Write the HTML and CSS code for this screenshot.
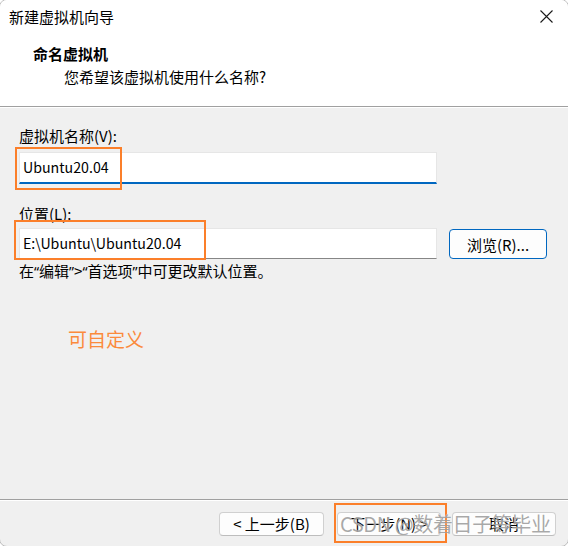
FILE: index.html
```html
<!DOCTYPE html>
<html lang="zh-CN">
<head>
<meta charset="utf-8">
<title>新建虚拟机向导</title>
<link rel="stylesheet" href="styles.css">
</head>
<body>
<div class="window">
  <div class="titlebar">
    <span class="title">新建虚拟机向导</span>
    <svg class="close" width="13" height="13" viewBox="0 0 13 13"><path d="M0.5 0.5 L12.5 12.5 M12.5 0.5 L0.5 12.5" stroke="#1a1a1a" stroke-width="1.1" fill="none"/></svg>
  </div>
  <div class="header">
    <div class="h1">命名虚拟机</div>
    <div class="h2">您希望该虚拟机使用什么名称?</div>
  </div>
  <div class="content">
    <div class="label">虚拟机名称(V):</div>
    <div class="input focused">Ubuntu20.04</div>
    <div class="label label2">位置(L):</div>
    <div class="row">
      <div class="input plain">E:\Ubuntu\Ubuntu20.04</div>
      <div class="browse">浏览(R)...</div>
    </div>
    <div class="note">在<span class="q">“</span>编辑<span class="q">”</span>&gt;<span class="q">“</span>首选项<span class="q">”</span>中可更改默认位置。</div>
    <div class="custom">可自定义</div>
  </div>
  <div class="footer">
    <div class="btn prev">&lt; 上一步(B)</div>
    <div class="btn next">下一步(N) &gt;</div>
    <div class="btn cancel">取消</div>
  </div>
  <div class="mark mark1"></div>
  <div class="mark mark2"></div>
  <div class="mark mark3"></div>
  <div class="watermark">CSDN @数着日子等毕业</div>
</div>
</body>
</html>
```
FILE: styles.css
```css
html, body {
  margin: 0;
  padding: 0;
}
body {
  width: 568px;
  height: 546px;
  overflow: hidden;
  background: #ffffff;
  font-family: "Noto Sans CJK SC", "Noto Sans", sans-serif;
  font-size: 15px;
  color: #000;
}
.window {
  position: relative;
  margin: -1px;
  width: 568px;
  height: 546px;
  border: 1px solid #bdbdbd;
  border-radius: 8px;
  overflow: hidden;
  background: #f0f0f0;
  display: flex;
  flex-direction: column;
}
.titlebar {
  height: 33px;
  flex: none;
  background: #fff;
  display: flex;
  align-items: center;
  justify-content: space-between;
  padding: 0 15px 0 9px;
}
.title {
  line-height: 20px;
}
.close {
  display: block;
}
.header {
  height: 73px;
  flex: none;
  background: #fff;
  border-bottom: 1px solid #a0a0a0;
}
.h1 {
  padding: 11px 0 0 33px;
  line-height: 20px;
  font-weight: bold;
}
.h2 {
  margin-top: 3px;
  padding-left: 64px;
  line-height: 20px;
}
.content {
  flex: 1;
  border-top: 1px solid #ffffff;
  padding: 18px 21px 0 19px;
}
.label {
  line-height: 20px;
}
.label2 {
  margin-top: 20px;
}
.input {
  box-sizing: border-box;
  width: 418px;
  background: #fff;
  border: 1px solid #e6e6e6;
  padding: 0 0 2px 3px;
  font-size: 14.2px;
  display: flex;
  align-items: center;
}
.focused {
  margin-top: 6px;
  height: 32px;
  border-bottom: 2px solid #0067c0;
}
.plain {
  height: 31px;
  border-bottom: 1px solid #868686;
}
.row {
  margin-top: 4px;
  display: flex;
  align-items: flex-start;
}
.browse {
  box-sizing: border-box;
  margin: 1px 0 0 12px;
  width: 98px;
  height: 30px;
  border: 1px solid #0067c0;
  border-radius: 4px;
  background: #fdfdfd;
  display: flex;
  align-items: center;
  justify-content: center;
}
.note {
  margin-top: 2px;
  line-height: 20px;
}
.q {
  font-family: "Noto Sans", sans-serif;
  font-size: 14px;
}
.custom {
  margin: 44px 0 0 49px;
  font-size: 19px;
  line-height: 26px;
  color: #fb8a3c;
}
.footer {
  flex: none;
  box-sizing: border-box;
  height: 47px;
  border-top: 1px solid #a0a0a0;
  box-shadow: inset 0 1px 0 #ffffff;
  display: flex;
  justify-content: flex-end;
  align-items: flex-start;
  padding: 12px 12px 0 0;
}
.btn {
  box-sizing: border-box;
  height: 24px;
  border: 1px solid #d0d0d0;
  border-bottom-color: #bdbdbd;
  border-radius: 4px;
  background: #fdfdfd;
  line-height: 21px;
  text-align: center;
}
.prev {
  width: 105px;
}
.next {
  width: 104px;
  margin-left: 13px;
}
.cancel {
  width: 104px;
  margin-left: 11px;
}
.mark {
  position: absolute;
  box-sizing: border-box;
  border: 2px solid #fb7f2a;
}
.mark1 {
  left: 15px;
  top: 147px;
  width: 107px;
  height: 43px;
}
.mark2 {
  left: 14px;
  top: 220px;
  width: 192px;
  height: 40px;
}
.mark3 {
  left: 334px;
  top: 503px;
  width: 113px;
  height: 40px;
}
.watermark {
  position: absolute;
  left: 340px;
  top: 511px;
  font-size: 20px;
  letter-spacing: -0.4px;
  line-height: 26px;
  white-space: nowrap;
  color: rgba(110, 110, 110, 0.6);
  text-shadow: 0 0 1px rgba(255, 255, 255, 0.9);
}
```
